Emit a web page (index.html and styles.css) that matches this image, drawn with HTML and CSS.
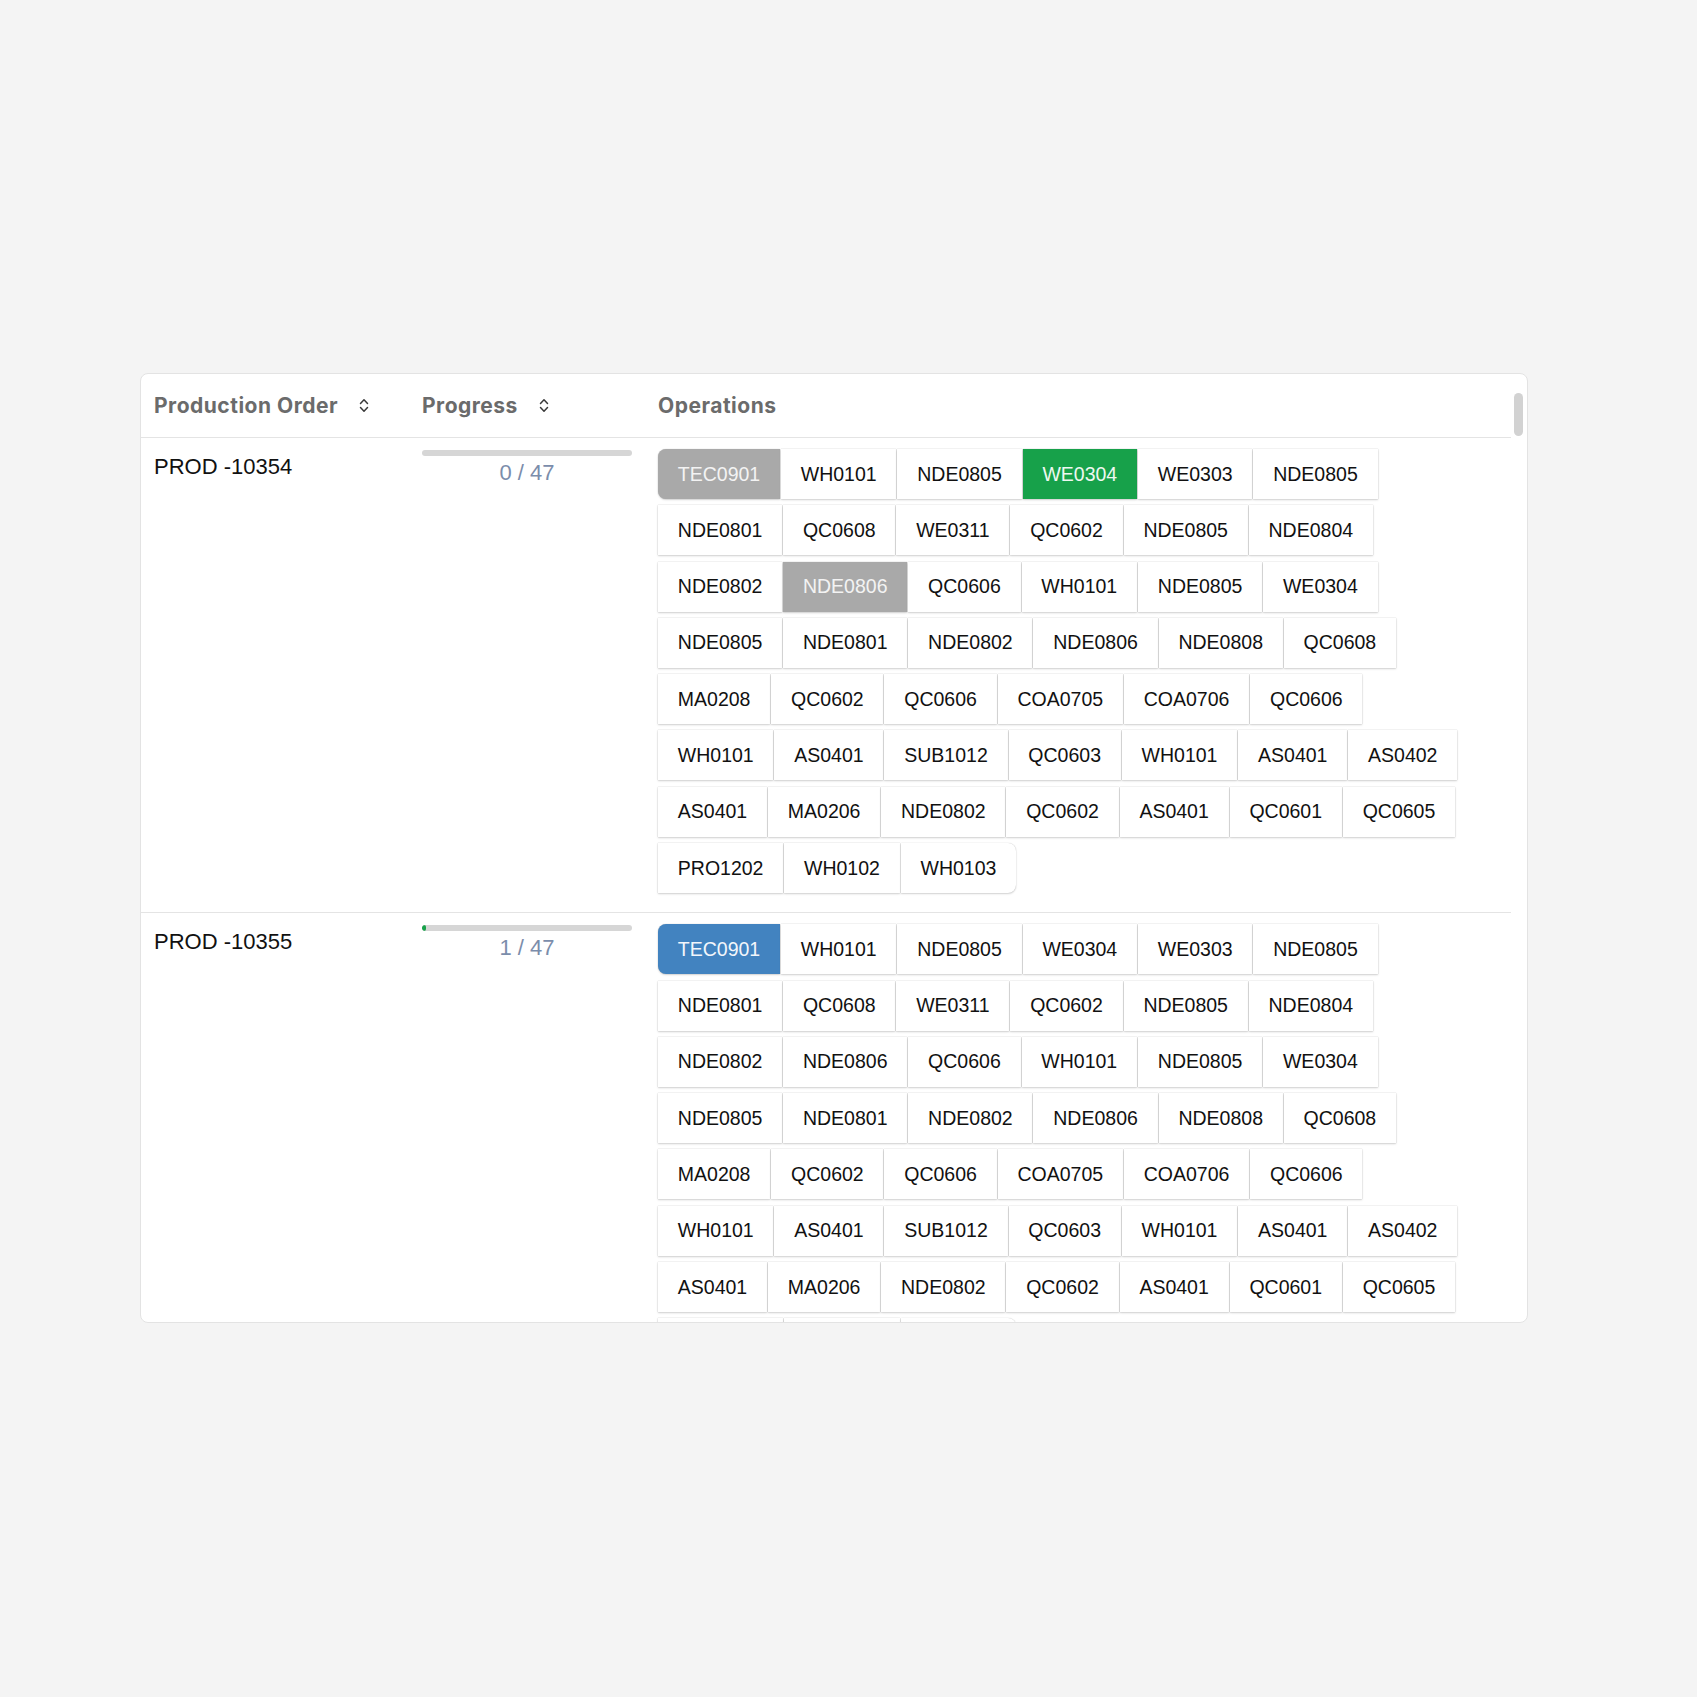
FILE: index.html
```html
<!DOCTYPE html>
<html lang="en">
<head>
<meta charset="utf-8">
<title>Production Orders</title>
<link rel="stylesheet" href="styles.css">
</head>
<body>
<div class="card">
  <div class="row head">
    <div class="th">Production Order
      <svg class="sort" viewBox="0 0 10 15" width="10" height="15"><path d="M1.5 5.5 L5 1.8 L8.5 5.5 M1.5 9.5 L5 13.2 L8.5 9.5"/></svg>
    </div>
    <div class="th">Progress
      <svg class="sort" viewBox="0 0 10 15" width="10" height="15"><path d="M1.5 5.5 L5 1.8 L8.5 5.5 M1.5 9.5 L5 13.2 L8.5 9.5"/></svg>
    </div>
    <div class="th">Operations</div>
  </div>

  <div class="row">
    <div class="cell"><div class="label">PROD -10354</div></div>
    <div class="cell">
      <div class="bar"><div class="fill" style="width:0%"></div></div>
      <div class="count">0 / 47</div>
    </div>
    <div class="cell">
      <div class="ops">
        <span class="op done">TEC0901</span><span class="op">WH0101</span><span class="op">NDE0805</span><span class="op ok">WE0304</span><span class="op">WE0303</span><span class="op">NDE0805</span>
        <span class="op">NDE0801</span><span class="op">QC0608</span><span class="op">WE0311</span><span class="op">QC0602</span><span class="op">NDE0805</span><span class="op">NDE0804</span>
        <span class="op">NDE0802</span><span class="op done">NDE0806</span><span class="op">QC0606</span><span class="op">WH0101</span><span class="op">NDE0805</span><span class="op">WE0304</span>
        <span class="op">NDE0805</span><span class="op">NDE0801</span><span class="op">NDE0802</span><span class="op">NDE0806</span><span class="op">NDE0808</span><span class="op">QC0608</span>
        <span class="op">MA0208</span><span class="op">QC0602</span><span class="op">QC0606</span><span class="op">COA0705</span><span class="op">COA0706</span><span class="op">QC0606</span>
        <span class="op">WH0101</span><span class="op">AS0401</span><span class="op">SUB1012</span><span class="op">QC0603</span><span class="op">WH0101</span><span class="op">AS0401</span><span class="op">AS0402</span>
        <span class="op">AS0401</span><span class="op">MA0206</span><span class="op">NDE0802</span><span class="op">QC0602</span><span class="op">AS0401</span><span class="op">QC0601</span><span class="op">QC0605</span>
        <span class="op">PRO1202</span><span class="op">WH0102</span><span class="op">WH0103</span>
      </div>
    </div>
  </div>

  <div class="row">
    <div class="cell"><div class="label">PROD -10355</div></div>
    <div class="cell">
      <div class="bar"><div class="fill" style="width:2.13%"></div></div>
      <div class="count">1 / 47</div>
    </div>
    <div class="cell">
      <div class="ops">
        <span class="op active">TEC0901</span><span class="op">WH0101</span><span class="op">NDE0805</span><span class="op">WE0304</span><span class="op">WE0303</span><span class="op">NDE0805</span>
        <span class="op">NDE0801</span><span class="op">QC0608</span><span class="op">WE0311</span><span class="op">QC0602</span><span class="op">NDE0805</span><span class="op">NDE0804</span>
        <span class="op">NDE0802</span><span class="op">NDE0806</span><span class="op">QC0606</span><span class="op">WH0101</span><span class="op">NDE0805</span><span class="op">WE0304</span>
        <span class="op">NDE0805</span><span class="op">NDE0801</span><span class="op">NDE0802</span><span class="op">NDE0806</span><span class="op">NDE0808</span><span class="op">QC0608</span>
        <span class="op">MA0208</span><span class="op">QC0602</span><span class="op">QC0606</span><span class="op">COA0705</span><span class="op">COA0706</span><span class="op">QC0606</span>
        <span class="op">WH0101</span><span class="op">AS0401</span><span class="op">SUB1012</span><span class="op">QC0603</span><span class="op">WH0101</span><span class="op">AS0401</span><span class="op">AS0402</span>
        <span class="op">AS0401</span><span class="op">MA0206</span><span class="op">NDE0802</span><span class="op">QC0602</span><span class="op">AS0401</span><span class="op">QC0601</span><span class="op">QC0605</span>
        <span class="op">PRO1202</span><span class="op">WH0102</span><span class="op">WH0103</span>
      </div>
    </div>
  </div>

  <div class="thumb"></div>
</div>
</body>
</html>
```
FILE: styles.css
```css
html, body {
  margin: 0;
}
body {
  background: #f4f4f4;
  padding-top: 373px;
  font-family: "Liberation Sans", Arial, sans-serif;
}
.card {
  position: relative;
  margin-left: 140px;
  width: 1388px;
  height: 950px;
  box-sizing: border-box;
  padding-right: 16px;
  background: #fff;
  border: 1px solid #e3e3e3;
  border-radius: 8px;
  overflow: hidden;
}
.row {
  display: grid;
  grid-template-columns: 268px 236px 1fr;
  border-bottom: 1px solid #e4e4e4;
}
.head {
  height: 62.5px;
  align-items: center;
}
.th {
  display: flex;
  align-items: center;
  padding: 0 13px;
  font-family: Inter, "Liberation Sans", sans-serif;
  font-weight: 700;
  font-size: 21px;
  letter-spacing: 0.5px;
  color: #6b6b6b;
  white-space: nowrap;
}
.sort {
  margin-left: 21px;
  fill: none;
  stroke: #3a3a3a;
  stroke-width: 1.5;
  stroke-linecap: round;
  stroke-linejoin: round;
}
.cell {
  padding: 11.5px 13px 12px;
}
.label {
  font-size: 22px;
  line-height: 35px;
  color: #111;
}
.bar {
  margin-top: 1px;
  width: 210px;
  height: 6px;
  background: #d6d6d6;
  border-radius: 3px;
  overflow: hidden;
}
.fill {
  height: 100%;
  background: #18a24a;
  border-radius: 3px;
}
.count {
  width: 210px;
  margin-top: 5px;
  text-align: center;
  font-size: 22px;
  line-height: 24px;
  color: #7b8dab;
}
.ops {
  display: flex;
  flex-wrap: wrap;
  row-gap: 6.3px;
  column-gap: 1px;
  max-width: 810px;
  padding-bottom: 6.7px;
}
.op {
  display: flex;
  align-items: center;
  height: 50px;
  padding: 0 19.8px;
  font-size: 19.5px;
  color: #111;
  background: #fff;
  white-space: nowrap;
  box-shadow: 0 1px 2px rgba(0, 0, 0, 0.16), 0 0 1px rgba(0, 0, 0, 0.24);
}
.op:first-child {
  border-radius: 8px 0 0 8px;
}
.op:last-child {
  border-radius: 0 8px 8px 0;
}
.op.done {
  background: #a9a9a9;
  color: #f3f3f3;
}
.op.ok {
  background: #17a14a;
  color: #eef8f1;
}
.op.active {
  background: #4283c0;
  color: #f2f6fb;
}
.thumb {
  position: absolute;
  top: 19px;
  right: 4px;
  width: 9px;
  height: 43px;
  border-radius: 5px;
  background: #d2d2d2;
}
```
